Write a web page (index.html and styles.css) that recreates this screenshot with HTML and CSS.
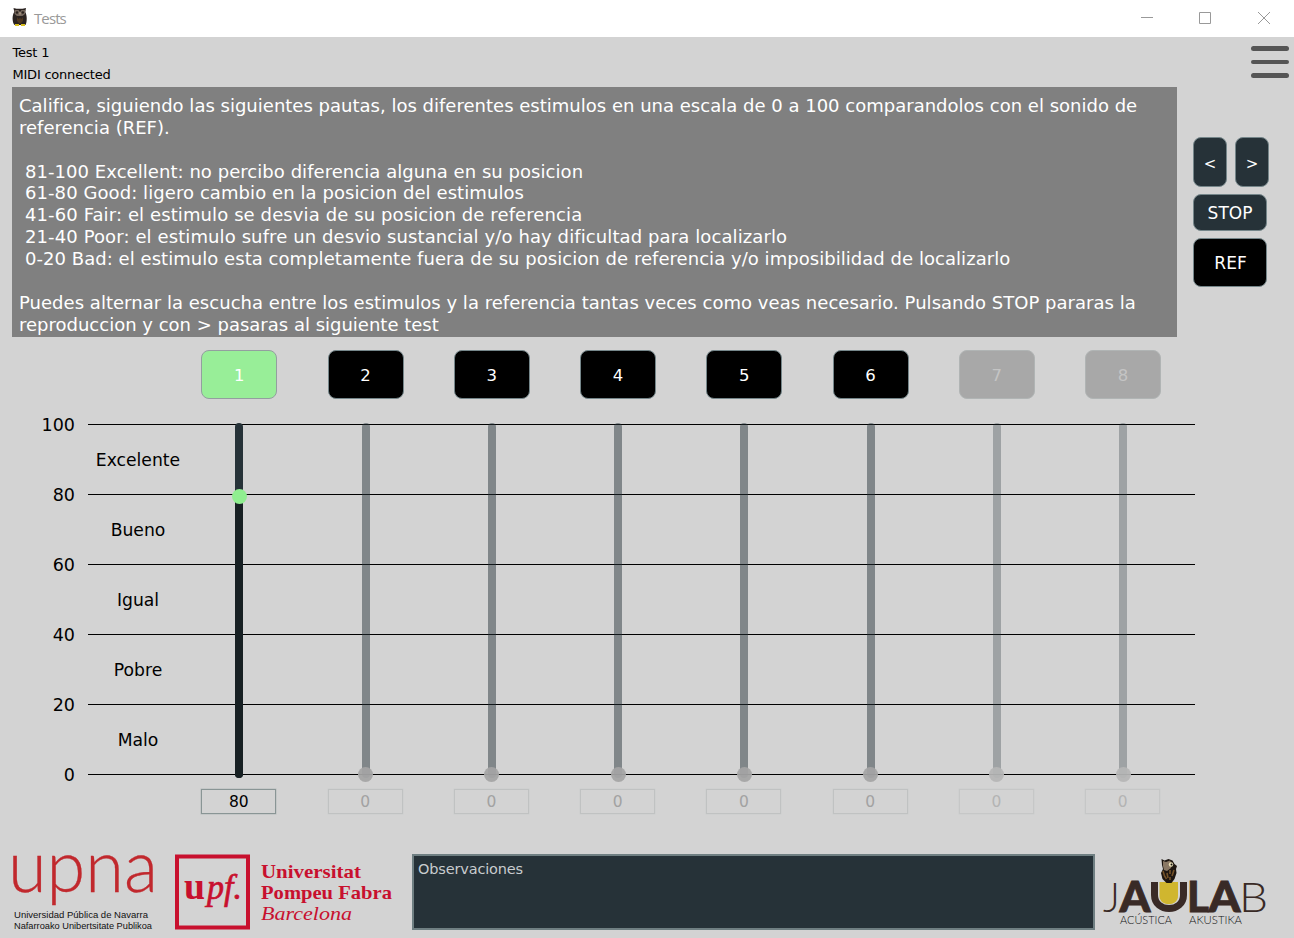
FILE: index.html
```html
<!DOCTYPE html>
<html lang="es">
<head>
<meta charset="utf-8">
<title>Tests</title>
<link rel="stylesheet" href="styles.css">
</head>
<body>
<header class="titlebar">
  <svg class="app-icon" width="16" height="20" viewBox="0 0 16 20">
    <path d="M1.500 1l3 .8h6l3.500-.8-.8 4c2 3 2 10 .3 13H2.500C0 15 0 8 2.300 5z" fill="#2b2320"/>
    <path d="M2.500 3h4l1.500 2 1.500-2h4l-.5 4-2.500 2H5L2.700 7z" fill="#75675d"/>
    <circle cx="5" cy="5.500" r="1.300" fill="#2a211c"/><circle cx="10.800" cy="5.500" r="1.300" fill="#2a211c"/>
    <path d="M7 5.500h2l-1 3z" fill="#b7a289"/>
    <path d="M5 10l1.500 2 1.500-1 1.500 1 1.500-2v4l-3 3-3-3z" fill="#4f3720"/>
    <path d="M3 17h4v2H3zM9 17h4v2H9z" fill="#d9bd1d"/>
  </svg>
  <span class="title">Tests</span>
  <svg class="window-controls" width="132" height="14" viewBox="0 0 132 14" fill="none" stroke="#999">
    <path d="M1 6.500h12M59.500 1.500h11v11h-11zM118 1l12 12M130 1l-12 12"/>
  </svg>
</header>
<main class="app">
  <div class="status">
    <div class="status-text"><p>Test 1</p><p>MIDI connected</p></div>
    <button class="menu" aria-label="Menu"><i></i><i class="thin"></i><i></i></button>
  </div>
  <div class="top">
    <section class="instructions">
      <p class="l1">Califica, siguiendo las siguientes pautas, los diferentes estimulos en una escala de 0 a 100 comparandolos con el sonido de</p>
      <p class="l2">referencia (REF).</p>
      <p>&nbsp;</p>
      <p class="item l3">81-100 Excellent: no percibo diferencia alguna en su posicion</p>
      <p class="item l4">61-80 Good: ligero cambio en la posicion del estimulos</p>
      <p class="item l5">41-60 Fair: el estimulo se desvia de su posicion de referencia</p>
      <p class="item l6">21-40 Poor: el estimulo sufre un desvio sustancial y/o hay dificultad para localizarlo</p>
      <p class="item l7">0-20 Bad: el estimulo esta completamente fuera de su posicion de referencia y/o imposibilidad de localizarlo</p>
      <p>&nbsp;</p>
      <p class="l8">Puedes alternar la escucha entre los estimulos y la referencia tantas veces como veas necesario. Pulsando STOP pararas la</p>
      <p class="l9">reproduccion y con &gt; pasaras al siguiente test</p>
    </section>
    <nav class="transport">
      <div class="nav-pair"><button class="btn nav">&lt;</button><button class="btn nav">&gt;</button></div>
      <button class="btn stop">STOP</button>
      <button class="btn ref">REF</button>
    </nav>
  </div>
  <section class="rating">
    <div class="scale">
      <div class="mark"><span>100</span><i></i></div><div class="grade">Excelente</div>
      <div class="mark"><span>80</span><i></i></div><div class="grade">Bueno</div>
      <div class="mark"><span>60</span><i></i></div><div class="grade">Igual</div>
      <div class="mark"><span>40</span><i></i></div><div class="grade">Pobre</div>
      <div class="mark"><span>20</span><i></i></div><div class="grade">Malo</div>
      <div class="mark"><span>0</span><i></i></div>
    </div>
    <div class="channels">
      <div class="channel active"><button class="btn stim">1</button><div class="track"><b></b></div><output>80</output></div>
      <div class="channel idle"><button class="btn stim">2</button><div class="track"></div><output>0</output></div>
      <div class="channel idle"><button class="btn stim">3</button><div class="track"></div><output>0</output></div>
      <div class="channel idle"><button class="btn stim">4</button><div class="track"></div><output>0</output></div>
      <div class="channel idle"><button class="btn stim">5</button><div class="track"></div><output>0</output></div>
      <div class="channel idle"><button class="btn stim">6</button><div class="track"></div><output>0</output></div>
      <div class="channel off"><button class="btn stim">7</button><div class="track"></div><output>0</output></div>
      <div class="channel off"><button class="btn stim">8</button><div class="track"></div><output>0</output></div>
    </div>
  </section>
  <footer class="footer">
    <svg class="upna" width="163" height="98" viewBox="0 0 163 98">
      <text class="upna-word" x="8" y="52" textLength="150" lengthAdjust="spacingAndGlyphs">upna</text>
      <text class="upna-sub" x="14" y="78" textLength="134" lengthAdjust="spacingAndGlyphs">Universidad Pública de Navarra</text>
      <text class="upna-sub" x="14" y="89" textLength="138" lengthAdjust="spacingAndGlyphs">Nafarroako Unibertsitate Publikoa</text>
    </svg>
    <svg class="upf" width="249" height="98" viewBox="163 0 249 98">
      <rect x="177" y="16.500" width="71" height="71" fill="none" stroke="#c8102e" stroke-width="4"/>
      <text class="upf-u" x="184" y="59" textLength="21" lengthAdjust="spacingAndGlyphs">u</text>
      <text class="upf-pf" x="207" y="59" textLength="35" lengthAdjust="spacingAndGlyphs">pf.</text>
      <text class="upf-name" x="261" y="38" textLength="100" lengthAdjust="spacingAndGlyphs">Universitat</text>
      <text class="upf-name" x="261" y="59" textLength="131" lengthAdjust="spacingAndGlyphs">Pompeu Fabra</text>
      <text class="upf-city" x="261" y="80" textLength="91" lengthAdjust="spacingAndGlyphs">Barcelona</text>
    </svg>
    <div class="notes">Observaciones</div>
    <svg class="jaulab" width="199" height="98" viewBox="1095 0 199 98">
      <path d="M1159.500 42h18.500v14c0 11-18.500 11-18.500 0z" fill="#d0b62f"/>
      <text class="j-thin" x="1103" y="72" textLength="17" lengthAdjust="spacingAndGlyphs">J</text>
      <text class="j-bold" x="1119.500" y="72" textLength="31" lengthAdjust="spacingAndGlyphs">A</text>
      <path d="M1154.500 42v13c0 18 29 18 29 0V42" fill="none" stroke="#392a26" stroke-width="7"/>
      <text class="j-bold" x="1187" y="72" textLength="22" lengthAdjust="spacingAndGlyphs">L</text>
      <text class="j-bold" x="1208.500" y="72" textLength="32" lengthAdjust="spacingAndGlyphs">A</text>
      <text class="j-thin" x="1239" y="72" textLength="29" lengthAdjust="spacingAndGlyphs">B</text>
      <text class="j-sub" x="1120" y="84" textLength="52" lengthAdjust="spacingAndGlyphs">ACÚSTICA</text>
      <text class="j-sub" x="1189" y="84" textLength="53" lengthAdjust="spacingAndGlyphs">AKUSTIKA</text>
      <path d="M1161.500 19l3 1.500 4-1.500 4 1.500 2 3.500 2.500 2-1 3 .5 4-2 6-3 4h-5l-4-4-1.500-6 2-4-1-4z" fill="#1d1611"/>
      <path d="M1163 21l3 1 4-1.500 2 3.500-1 4-4 3-3-1-1-4z" fill="#8a7864"/>
      <circle cx="1171" cy="24.500" r="2.200" fill="#eee3b8"/><circle cx="1171.500" cy="24.500" r="1" fill="#111"/>
      <path d="M1163 31l1.500 5 2 3M1167 33l1 5M1174 30l-2 6M1170 30v4M1170 37v3" stroke="#755228" stroke-width="1.600" fill="none"/>
    </svg>
  </footer>
</main>
</body>
</html>
```
FILE: styles.css
```css
* { box-sizing: border-box; }
body { margin: 0; width: 1294px; height: 938px; overflow: hidden; background: #d3d3d3; font-family: Verdana, "DejaVu Sans", sans-serif; font-size: 18px; color: #000; }
p { margin: 0; }
button { margin: 0; padding: 0; font: inherit; border: 0; background: none; }
.titlebar { height: 37px; background: #fff; display: flex; align-items: center; padding: 0 22px 2px 12px; }
.app-icon { margin-right: 6px; margin-bottom: 1px; }
.title { font: 15px "Open Sans", sans-serif; color: #999; flex: 1; letter-spacing: -.9px; }
.app { height: 901px; display: flex; flex-direction: column; }
.status { height: 50px; display: flex; justify-content: space-between; padding: 5px 5px 0 12.500px; }
.status-text { font-size: 13px; line-height: 22px; letter-spacing: -.22px; }
.menu { width: 38px; height: 32px; margin-top: 4px; display: flex; flex-direction: column; justify-content: space-between; }
.menu i { height: 5px; width: 38px; border-radius: 3px; background: #555; }
.menu .thin { height: 4px; }
.top { height: 250px; display: flex; gap: 16px; padding-left: 12px; }
.instructions { width: 1165px; height: 250px; background: #808080; color: #fff; padding: 8px 0 0 7px; line-height: 21.860px; white-space: nowrap; }
.item { padding-left: 6px; }
.l1 { letter-spacing: .01px; }
.l3 { letter-spacing: .05px; }
.l4 { letter-spacing: .075px; }
.l5 { letter-spacing: .105px; }
.l6 { letter-spacing: .105px; }
.l7 { letter-spacing: .043px; }
.l8 { letter-spacing: .03px; }
.transport { display: flex; flex-direction: column; gap: 7px; padding-top: 50px; }
.nav-pair { display: flex; gap: 8px; }
.btn { border: 1.500px solid #75868a; border-radius: 8px; background: #263238; color: #fff; font-size: 17px; display: block; }
.nav { width: 34px; height: 50px; font-size: 15px; padding: 3px 0 0; }
.stop { width: 74px; height: 37px; }
.ref { width: 74px; height: 49px; padding: 1px 0 0 1px; background: #000; }
.rating { height: 480px; display: flex; position: relative; }
.scale { width: 176px; padding-top: 77px; }
.mark { height: 21px; display: flex; align-items: center; position: relative; font-size: 17.500px; }
.mark span { width: 75px; text-align: right; }
.mark i { position: absolute; left: 88px; top: 10px; width: 1107px; height: 1px; background: #000; }
.grade { height: 49px; display: flex; align-items: center; justify-content: center; padding-left: 100px; font-size: 17.200px; }
.channels { position: relative; width: 1010px; display: grid; grid-template-columns: repeat(8, 126.250px); margin-left: .2px; }
.channel { display: flex; flex-direction: column; align-items: center; padding-top: 12.500px; }
.stim { width: 76px; height: 49.500px; background: #000; font-size: 16.500px; padding-top: 2px; }
.track { position: relative; width: 8px; height: 355px; margin-top: 24px; border-radius: 4px; background: rgba(38,50,56,.48); }
.track::after { content: ""; position: absolute; width: 15px; height: 15px; border-radius: 50%; left: -3.500px; top: 344px; background: rgba(165,165,165,.93); }
output { width: 75px; height: 25px; margin-top: 11px; margin-right: 1px; border: 1px solid #c0c2c2; box-shadow: 0 0 0 .500px #cbcccc; display: flex; align-items: center; justify-content: center; font-size: 15.500px; padding-top: 1px; color: #a2a2a2; }
.active .stim { background: #98ee98; border-color: #939f9f; }
.active .track { background: #263238; }
.active .track b { position: absolute; left: 0; right: 0; top: 73px; bottom: 0; border-radius: 4px; background: #172023; }
.active .track::after { top: 66px; background: #90ee90; }
.active output { border-color: #899595; box-shadow: 0 0 0 .500px #b5bbbb; color: #000; }
.off .stim { background: #a8a8a8; border-color: #b0b4b4; color: #c4c4c4; }
.off .track { background: rgba(38,50,56,.3); }
.off .track::after { background: rgba(182,182,182,.93); }
.off output { border-color: #c6c7c7; color: #b4b4b4; }
.footer { height: 98px; margin-top: 23px; display: flex; }
.upna, .upf, .jaulab { flex: none; overflow: visible; }
.notes { width: 683px; height: 76px; margin-top: 14px; border: 2px solid #6f7f82; background: #263238; color: #c8ccce; font-size: 14.500px; letter-spacing: -.16px; line-height: 18px; padding: 4px; }
.upna-word { font: 300 73px Lato, sans-serif; fill: #c1282d; stroke: #c1282d; stroke-width: .300px; }
.upna-sub { font: 9.500px "Liberation Sans", sans-serif; fill: #111; }
.upf-u, .upf-pf, .upf-name, .upf-city { font-family: "Liberation Serif", serif; fill: #c8102e; }
.upf-u { font-size: 38px; font-weight: bold; }
.upf-pf { font-size: 36px; font-style: italic; stroke: #c8102e; stroke-width: .700px; }
.upf-name { font-size: 19.500px; font-weight: bold; }
.upf-city { font-size: 19.500px; font-style: italic; }
.j-thin { font: 300 42px Lato, sans-serif; fill: #392a26; }
.j-bold { font: 900 42px Lato, sans-serif; fill: #392a26; stroke: #392a26; stroke-width: .800px; }
.j-sub { font: 300 11px Lato, sans-serif; fill: #111; }
```
